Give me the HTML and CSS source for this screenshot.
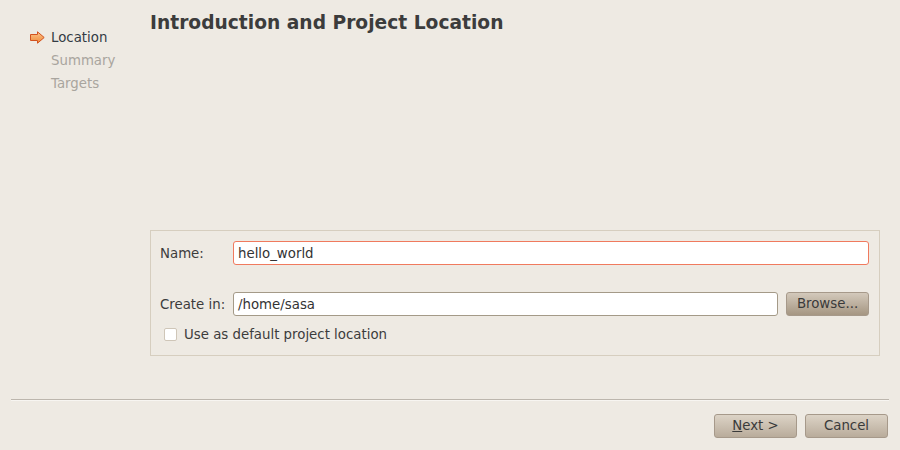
FILE: index.html
```html
<!DOCTYPE html>
<html>
<head>
<meta charset="utf-8">
<link rel="stylesheet" href="styles.css">
</head>
<body>
<div class="wizard">
  <div class="content">
    <nav class="steps">
      <div class="step current">
        <svg class="step-arrow" width="15" height="13" viewBox="0 0 15 13">
          <defs>
            <linearGradient id="ag" x1="0" y1="0" x2="0" y2="1">
              <stop offset="0" stop-color="#fbc58a"/>
              <stop offset="1" stop-color="#f08a3a"/>
            </linearGradient>
          </defs>
          <path d="M0.5 3.5 H7.5 V0.8 L14.2 6.5 L7.5 12.2 V9.5 H0.5 Z" fill="url(#ag)" stroke="#d2521f" stroke-width="1" stroke-linejoin="miter"/>
        </svg>
        <span>Location</span>
      </div>
      <div class="step">Summary</div>
      <div class="step">Targets</div>
    </nav>
    <main class="main">
      <h1 class="title">Introduction and Project Location</h1>
      <section class="group">
        <label class="label row1">Name:</label>
        <div class="field focus row1 span2"><span>hello_world</span></div>
        <label class="label row2">Create in:</label>
        <div class="field row2"><span>/home/sasa</span></div>
        <button class="btn browse row2">Browse...</button>
        <div class="check row3">
          <span class="box"></span>
          <span>Use as default project location</span>
        </div>
      </section>
    </main>
  </div>
  <footer class="footer">
    <div class="sep"></div>
    <div class="actions">
      <button class="btn"><u>N</u>ext &gt;</button>
      <button class="btn">Cancel</button>
    </div>
  </footer>
</div>
</body>
</html>
```
FILE: styles.css
```css
* { box-sizing: border-box; }
html, body {
  margin: 0;
  padding: 0;
  background: #eeeae3;
}
body {
  font-family: "DejaVu Sans", "Liberation Sans", sans-serif;
  font-size: 13.33px;
  color: #3c3c3c;
}
.wizard {
  width: 900px;
  height: 450px;
  display: flex;
  flex-direction: column;
}
.content {
  flex: 1;
  display: flex;
}
.steps {
  width: 150px;
  padding: 26px 0 0 30px;
}
.step {
  height: 23px;
  line-height: 23px;
  padding-left: 21px;
  color: #a9a59e;
  position: relative;
}
.step.current {
  color: #333b44;
}
.step-arrow {
  position: absolute;
  left: 0;
  top: 5px;
}
.main {
  flex: 1;
  display: flex;
  flex-direction: column;
  padding-right: 20px;
}
.title {
  margin: 0;
  padding-top: 12px;
  font-size: 18.67px;
  line-height: 22px;
  font-weight: bold;
  color: #3c3c3c;
}
.group {
  margin-top: auto;
  margin-bottom: 43px;
  height: 126px;
  border: 1px solid #d6cebf;
  padding: 10px 10px 0 9px;
  display: grid;
  grid-template-columns: 65px 1fr 83px;
  grid-template-rows: 24px 27px 24px 8px 20px;
  column-gap: 8px;
}
.row1 { grid-row: 1; }
.row2 { grid-row: 3; }
.row3 { grid-row: 5; grid-column: 1 / 4; }
.label {
  align-self: center;
  white-space: nowrap;
}
.field {
  height: 24px;
  background: #ffffff;
  border: 1px solid #a49a88;
  border-radius: 3px;
  padding: 0 4px;
  line-height: 23px;
  color: #333;
}
.field.focus {
  border-color: #f07a5e;
}
.span2 { grid-column: 2 / 4; }
.check {
  display: flex;
  align-items: center;
  gap: 7px;
  padding-left: 4px;
  height: 20px;
}
.box {
  width: 13px;
  height: 13px;
  background: #fff;
  border: 1px solid #cfc6b8;
  border-radius: 2px;
}
.btn {
  width: 83px;
  height: 24px;
  font-family: inherit;
  font-size: 13.33px;
  line-height: 22px;
  color: #3a3a3a;
  border: 1px solid #a6998a;
  border-radius: 3px;
  background: linear-gradient(#dcd3c6, #b9ac9b);
  padding: 0;
  margin: 0;
}
.btn.browse {
  background: linear-gradient(#d3c9bb, #a59682);
}
.btn u {
  text-decoration: underline;
}
.footer {
  display: flex;
  flex-direction: column;
}
.sep {
  margin: 0 11px;
  height: 2px;
  border-top: 1px solid #bcb6ad;
  border-bottom: 1px solid #f7f5f1;
}
.actions {
  display: flex;
  justify-content: flex-end;
  gap: 8px;
  padding: 13px 12px 12px;
}
```
